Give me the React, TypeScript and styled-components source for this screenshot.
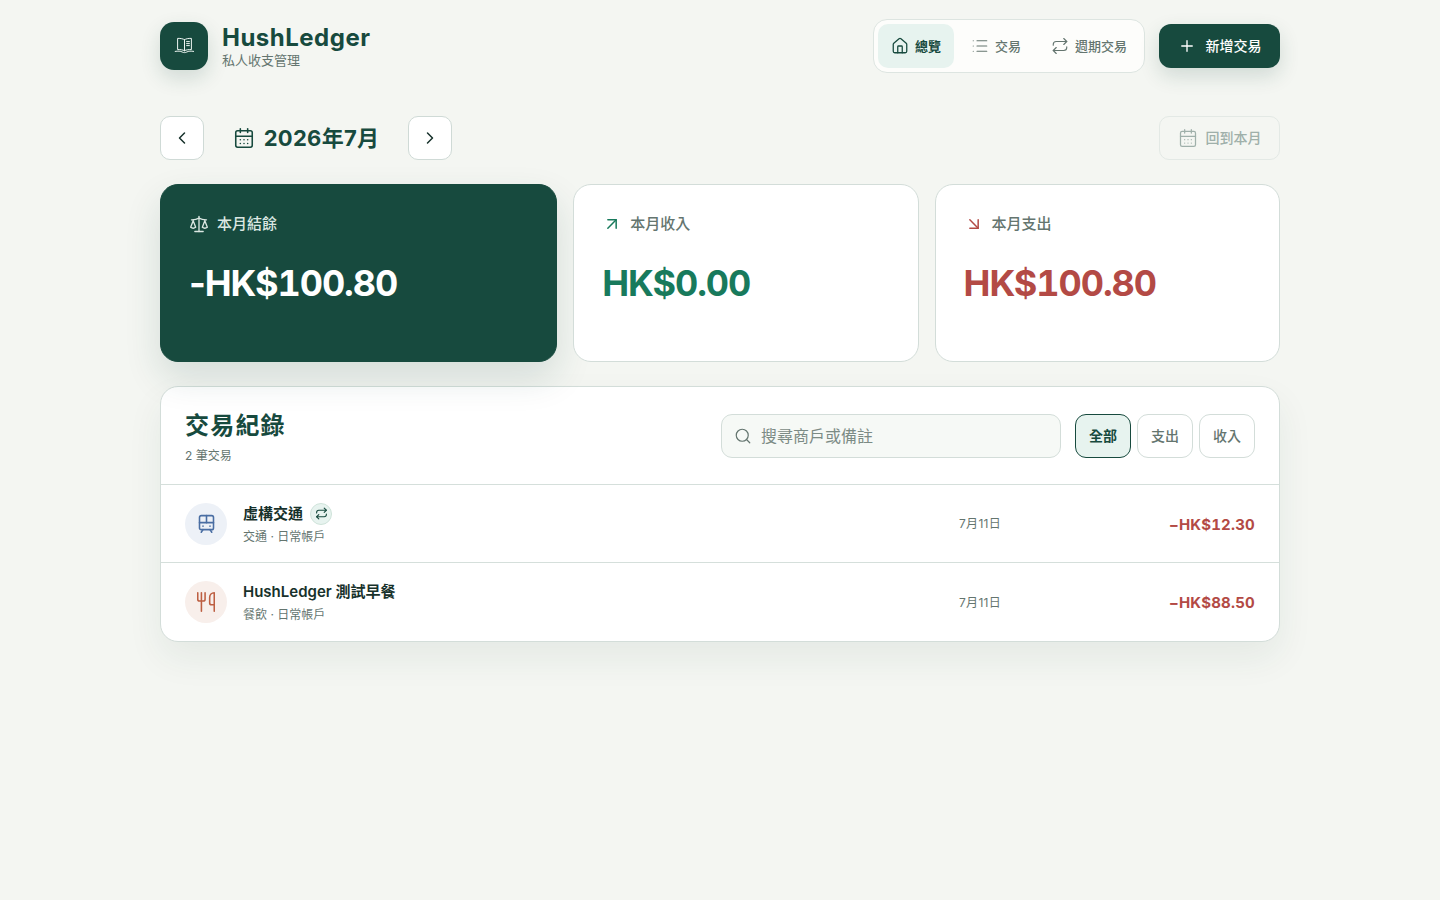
import React from 'react';
import styled, { createGlobalStyle } from 'styled-components';
import {
  ArrowDownRight, ArrowUpRight, CalendarDays, ChevronLeft, ChevronRight,
  House, List, Plus, Repeat, Scale, Search, TramFront, Utensils,
} from 'lucide-react';

const dark = '#174a3e';
const ink = '#17312b';
const muted = '#64756f';
const line = '#d5dfdb';
const fontStack = 'Inter, "Noto Sans CJK TC", sans-serif';

const Global = createGlobalStyle`
  html, body { margin: 0; padding: 0; background: #f4f6f2; }
  body { font-family: ${fontStack}; color: ${ink}; line-height: 1.5; }
  * { box-sizing: border-box; }
`;

const Page = styled.div`
  width: 1120px;
  height: 900px;
  margin: 0 auto;
  padding-top: 19px;
`;

const Header = styled.header`
  display: flex;
  align-items: flex-start;
  justify-content: space-between;
  height: 54px;
`;

const Brand = styled.div`
  display: flex;
  align-items: center;
  gap: 14px;
  margin-top: 3px;
`;

const LogoMark = styled.div`
  width: 48px;
  height: 48px;
  border-radius: 14px;
  background: ${dark};
  color: #eef5f2;
  display: flex;
  align-items: center;
  justify-content: center;
  box-shadow: 0 8px 20px rgba(23, 74, 62, 0.16);
`;

const BrandText = styled.div`
  display: flex;
  flex-direction: column;
  padding-bottom: 2px;
`;

const BrandName = styled.div`
  font-size: 24px;
  line-height: 29px;
  font-weight: 700;
  letter-spacing: 0.5px;
  color: ${dark};
`;

const BrandSub = styled.div`
  font-size: 13px;
  line-height: 16px;
  color: ${muted};
`;

const HeaderRight = styled.div`
  display: flex;
  align-items: center;
  gap: 14px;
`;

const Nav = styled.nav`
  display: flex;
  gap: 4px;
  padding: 4px;
  height: 54px;
  border: 1px solid #dde5e1;
  border-radius: 14px;
  background: #fdfdfb;
`;

const NavItem = styled.div<{ $active?: boolean }>`
  height: 44px;
  padding: 0 13px;
  display: flex;
  align-items: center;
  gap: 6px;
  border-radius: 10px;
  font-size: 13px;
  line-height: 20px;
  font-weight: ${p => (p.$active ? 700 : 500)};
  color: ${p => (p.$active ? dark : muted)};
  background: ${p => (p.$active ? '#e7f3ef' : 'transparent')};
`;

const AddButton = styled.button`
  width: 121px;
  height: 44px;
  border: 0;
  border-radius: 12px;
  background: ${dark};
  color: #fff;
  font: 500 14px/20px ${fontStack};
  display: flex;
  align-items: center;
  justify-content: center;
  gap: 10px;
  box-shadow: 0 8px 20px rgba(23, 74, 62, 0.16);
`;

const MonthRow = styled.div`
  display: flex;
  align-items: center;
  justify-content: space-between;
  margin-top: 43px;
  height: 44px;
`;

const MonthNav = styled.div`
  display: flex;
  align-items: center;
`;

const IconButton = styled.button`
  width: 44px;
  height: 44px;
  border: 1px solid #cfdad6;
  border-radius: 10px;
  background: #fff;
  color: ${ink};
  display: flex;
  align-items: center;
  justify-content: center;
  padding: 0;
`;

const MonthLabel = styled.div`
  width: 204px;
  display: flex;
  align-items: center;
  justify-content: center;
  gap: 9px;
  font-size: 22px;
  line-height: 30px;
  font-weight: 700;
  letter-spacing: 0.3px;
  color: ${dark};
`;

const TodayButton = styled.button`
  width: 121px;
  height: 44px;
  border: 1px solid #e3e9e5;
  border-radius: 10px;
  background: transparent;
  color: #9fb0aa;
  font: 500 14px/20px ${fontStack};
  display: flex;
  align-items: center;
  justify-content: center;
  gap: 8px;
  padding: 0;
`;

const Cards = styled.section`
  display: grid;
  grid-template-columns: 1.15fr 1fr 1fr;
  gap: 16px;
  margin-top: 24px;
`;

const Card = styled.div<{ $featured?: boolean }>`
  height: 178px;
  border-radius: 18px;
  padding: 28px;
  background: ${p => (p.$featured ? dark : '#fff')};
  border: 1px solid ${p => (p.$featured ? dark : '#d3ddd9')};
  box-shadow: ${p => (p.$featured ? '0 16px 36px rgba(23, 74, 62, 0.14)' : 'none')};
`;

const CardLabel = styled.div<{ $featured?: boolean }>`
  display: flex;
  align-items: center;
  gap: 8px;
  height: 22px;
  font-size: 15px;
  line-height: 22px;
  font-weight: 500;
  color: ${p => (p.$featured ? '#dbe7e2' : muted)};
`;

const Amount = styled.div<{ $color: string }>`
  margin-top: 26px;
  font-size: 36px;
  line-height: 44px;
  font-weight: 700;
  letter-spacing: -1.08px;
  font-variant-numeric: tabular-nums;
  color: ${p => p.$color};
`;

const Sign = styled.span`
  font-variant-numeric: normal;
`;

const Panel = styled.section`
  margin-top: 24px;
  background: #fff;
  border: 1px solid #d3ddd9;
  border-radius: 18px;
  box-shadow: 0 16px 36px rgba(23, 74, 62, 0.07);
  overflow: hidden;
`;

const PanelHead = styled.div`
  height: 97px;
  padding: 3px 24px 0;
  display: flex;
  align-items: center;
  justify-content: space-between;
`;

const PanelTitle = styled.h2`
  margin: 0;
  font-size: 24px;
  line-height: 32px;
  font-weight: 700;
  letter-spacing: 1.2px;
  color: ${dark};
`;

const PanelCount = styled.div`
  margin-top: 5px;
  font-size: 12px;
  line-height: 18px;
  color: ${muted};
`;

const Controls = styled.div`
  display: flex;
  align-items: center;
  gap: 6px;
  margin-top: -3px;
`;

const SearchBox = styled.div`
  width: 340px;
  height: 44px;
  margin-right: 8px;
  padding: 0 12px;
  display: flex;
  align-items: center;
  gap: 9px;
  background: #f6f9f6;
  border: 1px solid #d3ddd9;
  border-radius: 11px;
  font-size: 16px;
  line-height: 24px;
  color: #7c8b85;
`;

const Filter = styled.button<{ $active?: boolean }>`
  width: 56px;
  height: 44px;
  padding: 0;
  border-radius: 11px;
  border: 1px solid ${p => (p.$active ? dark : '#d3ddd9')};
  background: ${p => (p.$active ? '#e7f3ef' : '#fff')};
  color: ${p => (p.$active ? dark : muted)};
  font: ${p => (p.$active ? 700 : 500)} 14px/20px ${fontStack};
`;

const Row = styled.div`
  height: 78px;
  padding: 1px 24px 0;
  border-top: 1px solid ${line};
  display: flex;
  align-items: center;
  &:last-child {
    height: 79px;
  }
`;

const CategoryIcon = styled.div<{ $bg: string; $fg: string }>`
  width: 42px;
  height: 42px;
  flex: none;
  margin-top: -1px;
  border-radius: 50%;
  background: ${p => p.$bg};
  color: ${p => p.$fg};
  display: flex;
  align-items: center;
  justify-content: center;
`;

const RowMain = styled.div`
  margin-left: 16px;
  flex: 1;
`;

const RowTitle = styled.div`
  display: flex;
  align-items: center;
  gap: 7px;
  height: 22px;
  font-size: 15px;
  line-height: 22px;
  font-weight: 600;
  color: ${ink};
`;

const RecurBadge = styled.span`
  width: 22px;
  height: 22px;
  border-radius: 50%;
  background: #e7f3ef;
  border: 1px solid #cfe3da;
  color: ${dark};
  display: flex;
  align-items: center;
  justify-content: center;
`;

const RowSub = styled.div`
  margin-top: 3px;
  font-size: 12px;
  line-height: 18px;
  color: ${muted};
`;

const RowDate = styled.div`
  width: 70px;
  font-size: 12px;
  line-height: 18px;
  letter-spacing: 0.3px;
  color: ${muted};
`;

const RowAmount = styled.div`
  width: 226px;
  margin-top: 1px;
  text-align: right;
  font-size: 15px;
  line-height: 22px;
  font-weight: 700;
  letter-spacing: 0.2px;
  font-variant-numeric: tabular-nums;
  color: #b34a45;
`;

const BookLogo = () => (
  <svg width="20" height="20" viewBox="0 0 20 20" fill="none" stroke="currentColor" strokeWidth="1" strokeLinecap="round" strokeLinejoin="round" aria-hidden="true">
    <path d="M10.5 3.8C9 2.7 6.8 2.3 3.6 2.4V13.6c2.9-.1 5.3.2 6.9 1.2 1.6-1 4-1.3 6.9-1.2V2.4c-3.2-.1-5.4.3-6.9 1.4z" />
    <path d="M10.5 3.8v11" />
    <path d="M12.6 5.6h2.8M12.6 7.6h2.8M12.6 9.6h2.8" />
    <path d="M1.2 15.4c2.8-.5 5.4-.3 7 .6.7.4 1.5.6 2.3.6s1.6-.2 2.3-.6c1.6-.9 4.2-1.1 7-.6" />
  </svg>
);

export default function App() {
  return (
    <>
      <Global />
      <Page>
        <Header>
          <Brand>
            <LogoMark><BookLogo /></LogoMark>
            <BrandText>
              <BrandName>HushLedger</BrandName>
              <BrandSub>私人收支管理</BrandSub>
            </BrandText>
          </Brand>
          <HeaderRight>
            <Nav>
              <NavItem $active><House size={18} strokeWidth={1.7} />總覽</NavItem>
              <NavItem><List size={18} strokeWidth={1.5} />交易</NavItem>
              <NavItem><Repeat size={18} strokeWidth={1.5} />週期交易</NavItem>
            </Nav>
            <AddButton><Plus size={18} strokeWidth={1.8} />新增交易</AddButton>
          </HeaderRight>
        </Header>

        <MonthRow>
          <MonthNav>
            <IconButton aria-label="上個月"><ChevronLeft size={20} strokeWidth={1.8} /></IconButton>
            <MonthLabel><CalendarDays size={22} strokeWidth={1.7} />2026年7月</MonthLabel>
            <IconButton aria-label="下個月"><ChevronRight size={20} strokeWidth={1.8} /></IconButton>
          </MonthNav>
          <TodayButton><CalendarDays size={20} strokeWidth={1.5} />回到本月</TodayButton>
        </MonthRow>

        <Cards>
          <Card $featured>
            <CardLabel $featured><Scale size={20} strokeWidth={1.6} />本月結餘</CardLabel>
            <Amount $color="#ffffff"><Sign>-</Sign>HK$100.80</Amount>
          </Card>
          <Card>
            <CardLabel><ArrowUpRight size={20} strokeWidth={1.8} color="#187a5c" />本月收入</CardLabel>
            <Amount $color="#187a5c">HK$0.00</Amount>
          </Card>
          <Card>
            <CardLabel><ArrowDownRight size={20} strokeWidth={1.8} color="#b34a45" />本月支出</CardLabel>
            <Amount $color="#b34a45">HK$100.80</Amount>
          </Card>
        </Cards>

        <Panel>
          <PanelHead>
            <div>
              <PanelTitle>交易紀錄</PanelTitle>
              <PanelCount>2 筆交易</PanelCount>
            </div>
            <Controls>
              <SearchBox><Search size={18} strokeWidth={1.6} color={muted} />搜尋商戶或備註</SearchBox>
              <Filter $active>全部</Filter>
              <Filter>支出</Filter>
              <Filter>收入</Filter>
            </Controls>
          </PanelHead>
          <Row>
            <CategoryIcon $bg="#edf1f7" $fg="#4a6ea3"><TramFront size={21} strokeWidth={1.8} /></CategoryIcon>
            <RowMain>
              <RowTitle>虛構交通<RecurBadge><Repeat size={13} strokeWidth={2} /></RecurBadge></RowTitle>
              <RowSub>交通 · 日常帳戶</RowSub>
            </RowMain>
            <RowDate>7月11日</RowDate>
            <RowAmount>−HK$12.30</RowAmount>
          </Row>
          <Row>
            <CategoryIcon $bg="#f8efeb" $fg="#bd5f42"><Utensils size={22} strokeWidth={1.7} /></CategoryIcon>
            <RowMain>
              <RowTitle>HushLedger 測試早餐</RowTitle>
              <RowSub>餐飲 · 日常帳戶</RowSub>
            </RowMain>
            <RowDate>7月11日</RowDate>
            <RowAmount>−HK$88.50</RowAmount>
          </Row>
        </Panel>
      </Page>
    </>
  );
}
